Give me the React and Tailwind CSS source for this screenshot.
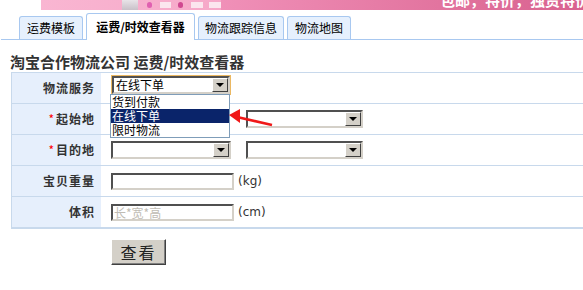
import React from 'react'

// classic win-style dropdown arrow button
const DropButton = () => (
    <div className="flex w-[16px] shrink-0 items-center justify-center border border-t-white border-l-white border-b-[#404040] border-r-[#404040] bg-[#d4d0c8]">
        <div className="h-0 w-0 border-x-[4px] border-t-[4px] border-x-transparent border-t-black" />
    </div>
)

const Select = ({ className = '', text = '' }) => (
    <div className={`flex h-[18px] border-2 border-t-[#505050] border-l-[#505050] border-b-[#d4d0c8] border-r-[#d4d0c8] bg-white ${className}`}>
        <div className="flex-1 truncate pl-[2px] text-[12px] leading-[14px] text-black">{text}</div>
        <DropButton />
    </div>
)

const Input = ({ placeholder }) => (
    <div className="flex h-[17px] w-[123px] items-center border-2 border-t-[#505050] border-l-[#505050] border-b-[#d4d0c8] border-r-[#d4d0c8] bg-white pl-[1px] text-[12px] leading-[13px] text-[#c0bcb4]">
        {placeholder}
    </div>
)

const Label = ({ children, required }) => (
    <div className="flex w-[89px] shrink-0 items-center justify-end bg-[#e6effc] pr-[6px] text-[12px] font-bold tracking-[1px] text-[#333]">
        {required && <span className="mr-[1px] font-normal text-[#ff0000]">*</span>}
        {children}
    </div>
)

const Row = ({ label, required, children }) => (
    <div className="flex h-[31px] border-t border-[#c8d9ec]">
        <Label required={required}>{label}</Label>
        <div className="flex flex-1 items-center pl-[10px]">{children}</div>
    </div>
)

const tabs = [
    { name: '运费模板', w: 'w-[64px]' },
    { name: '运费/时效查看器', w: 'w-[109px]', active: true },
    { name: '物流跟踪信息', w: 'w-[86px]' },
    { name: '物流地图', w: 'w-[64px]' },
]

export default function App() {
    return (
        <div className="relative h-[290px] w-[583px] overflow-hidden bg-white font-['Noto_Sans_CJK_SC',sans-serif] text-[#333]">
            {/* banner strip */}
            <div className="ml-[41px] flex h-[10px] overflow-hidden">
                <div className="flex w-[187px] items-end bg-gradient-to-r from-[#f9b6d2] to-[#f6a8c8]">
                    <div className="ml-[81px] h-[10px] w-[16px] bg-gradient-to-b from-[#e8e4e8] to-[#c8c0c8]" />
                    <div className="ml-[9px] mb-[2px] h-[6px] w-[5px] rounded-full bg-[#e060b0]" />
                    <div className="ml-[8px] mb-[2px] h-[6px] w-[11px] bg-[#fbe6ee]" />
                    <div className="ml-[7px] mb-[2px] h-[6px] w-[5px] rounded-full bg-[#d04890]" />
                    <div className="ml-[8px] mb-[2px] h-[6px] w-[12px] bg-[#fbe6ee]" />
                    <div className="ml-[6px] mb-[2px] h-[6px] w-[12px] bg-[#fbe6ee]" />
                </div>
                <div className="flex-1 bg-gradient-to-r from-[#f090b8] to-[#d8608e]">
                    <div className="ml-[219px] mt-[-9px] whitespace-nowrap text-[15px] font-bold leading-[18px] text-white">
                        包邮，特价，独资特价
                    </div>
                </div>
            </div>

            {/* tabs */}
            <div className="mt-[3px] ml-[1px] flex h-[27px] items-end gap-[3px] border-b border-[#a8c8f0] pl-[18px]">
                {tabs.map((t) =>
                    t.active ? (
                        <div
                            key={t.name}
                            className={`${t.w} mb-[-1px] flex h-[27px] items-center justify-center rounded-t-[3px] border border-b-0 border-[#a8c8f0] bg-white text-[12px] font-bold text-black`}
                        >
                            {t.name}
                        </div>
                    ) : (
                        <div
                            key={t.name}
                            className={`${t.w} flex h-[23px] items-center justify-center rounded-t-[3px] border border-b-0 border-[#a8c8f0] bg-[#e6f0fd] text-[12px] text-black`}
                        >
                            {t.name}
                        </div>
                    )
                )}
            </div>

            {/* title */}
            <div className="mt-[12px] ml-[10px] h-[20px] text-[15px] font-bold leading-[20px] text-[#333]">
                淘宝合作物流公司 运费/时效查看器
            </div>

            {/* form table */}
            <div className="ml-[11px] border-b-2 border-l border-[#c8d9ec]">
                <Row label="物流服务">
                    <div className="mb-[6px] border border-[#ebb862]">
                        <Select className="w-[118px]" text="在线下单" />
                    </div>
                </Row>
                <Row label="起始地" required>
                    <div className="w-[120px]" />
                    <Select className="ml-[15px] w-[117px]" />
                </Row>
                <Row label="目的地" required>
                    <Select className="w-[120px]" />
                    <Select className="ml-[15px] w-[117px]" />
                </Row>
                <Row label="宝贝重量">
                    <Input />
                    <span className="ml-[4px] font-['DejaVu_Sans',sans-serif] text-[12px] text-[#333]">(kg)</span>
                </Row>
                <Row label="体积">
                    <Input placeholder="长*宽*高" />
                    <span className="ml-[4px] font-['DejaVu_Sans',sans-serif] text-[12px] text-[#333]">(cm)</span>
                </Row>
            </div>

            {/* submit */}
            <div className="mt-[10px] ml-[111px]">
                <button className="flex h-[26px] w-[55px] items-center justify-center border border-t-white border-l-white border-b-[#404040] border-r-[#404040] bg-[#d4d0c8] text-[16px] tracking-[2px] text-[#222] shadow-[inset_-1px_-1px_0_#808080]">
                    查看
                </button>
            </div>

            {/* open dropdown list */}
            <div className="absolute left-[110px] top-[94px] w-[120px] border border-[#7f9db9] bg-white text-[12px] leading-[14px] text-black">
                <div className="h-[14px] pl-[1px]">货到付款</div>
                <div className="h-[14px] bg-[#0a246a] pl-[1px] text-white">在线下单</div>
                <div className="h-[14px] pl-[1px]">限时物流</div>
            </div>

            {/* red annotation arrow */}
            <svg className="absolute left-0 top-0" width="583" height="290">
                <line x1="272" y1="125" x2="237" y2="117" stroke="#f01818" strokeWidth="2.5" />
                <polygon points="229,115 240,109 240,123" fill="#f01818" />
            </svg>
        </div>
    )
}
